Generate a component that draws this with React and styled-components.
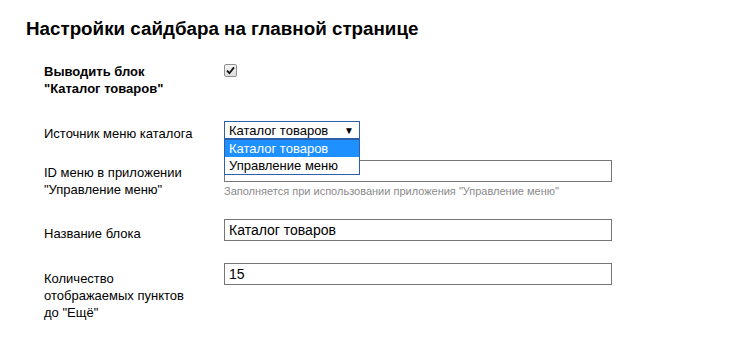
import React from 'react';
import styled, { createGlobalStyle } from 'styled-components';

const GlobalStyle = createGlobalStyle`
	html, body {
		margin: 0;
		padding: 0;
		background: #fff;
	}
	body {
		font-family: "Liberation Sans", Arial, sans-serif;
		color: #000;
	}
`;

const Page = styled.div`
	padding: 16px 24px 0 24px;
`;

const Title = styled.h2`
	margin: 0 0 21px 2px;
	font-size: 18.8px;
	font-weight: bold;
	line-height: 26px;
`;

const Form = styled.div`
	display: flex;
	flex-direction: column;
	padding-left: 20px;
`;

const Row = styled.div`
	display: grid;
	grid-template-columns: 180px 388px;
	margin-bottom: ${props => props.gap || 21}px;
`;

const Label = styled.div`
	font-size: 13px;
	line-height: 17px;
	padding-top: ${props => props.pad || 0}px;
	font-weight: ${props => (props.bold ? 'bold' : 'normal')};
`;

const Field = styled.div`
	display: flex;
	flex-direction: column;
	align-items: flex-start;
`;

const TextInput = styled.input`
	box-sizing: border-box;
	width: 388px;
	height: 22px;
	margin: 0;
	padding: 1px 4px;
	border: 1px solid #767676;
	font-family: "Liberation Sans", Arial, sans-serif;
	font-size: 14px;
	color: #000;
	outline: none;
`;

const Hint = styled.div`
	margin-top: 2px;
	font-size: 11px;
	line-height: 14px;
	color: #8a8a8a;
`;

const CheckBox = styled.span`
	box-sizing: border-box;
	display: inline-flex;
	align-items: center;
	justify-content: center;
	width: 13px;
	height: 13px;
	margin-top: 1px;
	border: 1px solid #8f8f8f;
	border-radius: 2px;
	background: linear-gradient(#f4f4f4, #dedede);
`;

const SelectWrap = styled.div`
	position: relative;
	width: 136px;
`;

const SelectBox = styled.div`
	box-sizing: border-box;
	display: flex;
	align-items: center;
	justify-content: space-between;
	height: 18px;
	padding: 0 4px;
	border: 1px solid #2f5fa8;
	font-size: 13px;
`;

const Arrow = styled.span`
	font-size: 10px;
	margin-right: 1px;
`;

const Options = styled.div`
	position: absolute;
	left: 0;
	top: 18px;
	width: 136px;
	box-sizing: border-box;
	border: 1px solid #2f5fa8;
	background: #fff;
	z-index: 2;
`;

const Option = styled.div`
	height: 17px;
	line-height: 17px;
	padding-left: 4px;
	font-size: 13px;
	background: ${props => (props.active ? '#1e90ff' : '#fff')};
	color: ${props => (props.active ? '#fff' : '#000')};
`;

export default function App() {
	return (
		<Page>
			<GlobalStyle />
			<Title>Настройки сайдбара на главной странице</Title>
			<Form>
				<Row gap={24}>
					<Label bold>Выводить блок<br />"Каталог товаров"</Label>
					<Field>
						<CheckBox>
							<svg width="9" height="9" viewBox="0 0 9 9">
								<path d="M1 4.6 L3.4 7.2 L8 1.4" fill="none" stroke="#111" strokeWidth="1.8" />
							</svg>
						</CheckBox>
					</Field>
				</Row>
				<Row gap={18}>
					<Label pad={4}>Источник меню каталога</Label>
					<Field>
						<SelectWrap>
							<SelectBox>
								<span>Каталог товаров</span>
								<Arrow>▼</Arrow>
							</SelectBox>
							<Options>
								<Option active>Каталог товаров</Option>
								<Option>Управление меню</Option>
							</Options>
						</SelectWrap>
					</Field>
				</Row>
				<Row gap={21}>
					<Label pad={4}>ID меню в приложении<br />"Управление меню"</Label>
					<Field>
						<TextInput defaultValue="" />
						<Hint>Заполняется при использовании приложения "Управление меню"</Hint>
					</Field>
				</Row>
				<Row gap={21}>
					<Label pad={6}>Название блока</Label>
					<Field>
						<TextInput defaultValue="Каталог товаров" />
					</Field>
				</Row>
				<Row>
					<Label pad={7}>Количество<br />отображаемых пунктов<br />до "Ещё"</Label>
					<Field>
						<TextInput defaultValue="15" />
					</Field>
				</Row>
			</Form>
		</Page>
	);
}
